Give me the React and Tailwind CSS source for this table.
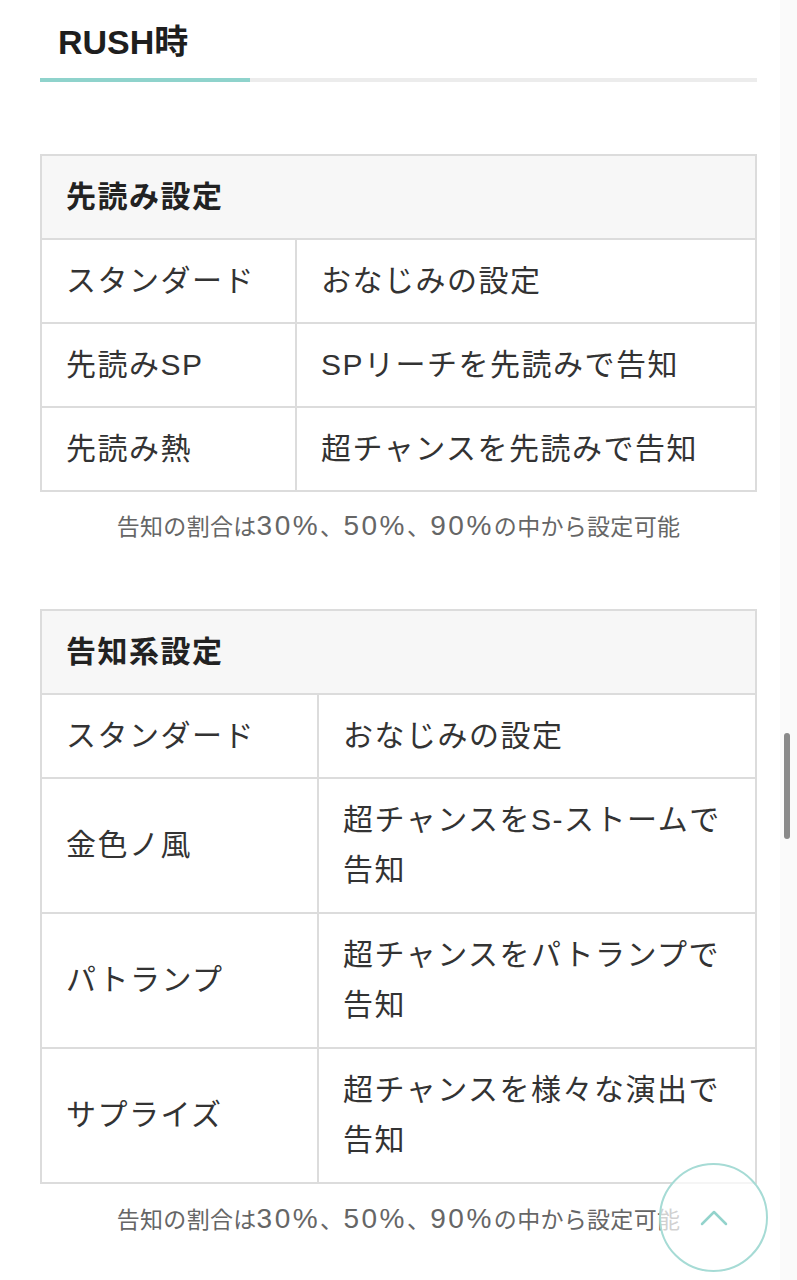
import React from 'react';

const senyomi = [
    ['スタンダード', ['おなじみの設定']],
    ['先読みSP', ['SPリーチを先読みで告知']],
    ['先読み熱', ['超チャンスを先読みで告知']],
];

const kokuchi = [
    ['スタンダード', ['おなじみの設定']],
    ['金色ノ風', ['超チャンスをS-ストームで', '告知']],
    ['パトランプ', ['超チャンスをパトランプで', '告知']],
    ['サプライズ', ['超チャンスを様々な演出で', '告知']],
];

const SettingTable = ({ title, rows, leftWidth }) => {
    return (
        <table className='w-full table-fixed border-collapse border-2 border-[#dcdcdc] text-[30px] leading-[50px] tracking-[1.5px] text-[#333]'>
            <colgroup>
                <col className={leftWidth} />
                <col />
            </colgroup>
            <thead>
                <tr>
                    <th colSpan={2} className='bg-[#f7f7f7] border-2 border-[#dcdcdc] px-[24px] py-[16px] text-left font-bold text-[#222]'>{title}</th>
                </tr>
            </thead>
            <tbody>
                {rows.map(([label, lines]) => {
                    const pad = lines.length > 1 ? 'pt-[16px] pb-[17px]' : 'py-[16px]';
                    return (
                        <tr key={label}>
                            <td className={`border-2 border-[#dcdcdc] px-[24px] ${pad} align-middle whitespace-nowrap`}>{label}</td>
                            <td className={`border-2 border-[#dcdcdc] px-[24px] ${pad} align-middle whitespace-nowrap`}>
                                {lines.map((l) => <div key={l}>{l}</div>)}
                            </td>
                        </tr>
                    );
                })}
            </tbody>
        </table>
    );
};

const Num = ({ children }) => <span className='text-[28px] tracking-[2.5px]'>{children}</span>;

const Note = ({ className }) => (
    <p className={`text-center text-[23px] leading-[34px] tracking-[0.3px] text-[#666] ${className}`}>
        告知の割合は<Num>30%</Num>、<Num>50%</Num>、<Num>90%</Num>の中から設定可能
    </p>
);

export default function App() {
    return (
        <div className='relative h-[1280px] bg-white overflow-hidden' style={{ fontFamily: '"Liberation Sans", "Noto Sans CJK JP", sans-serif' }}>
            <div className='absolute top-0 right-0 w-[17px] h-full bg-[#fafafa]'></div>
            <div className='relative px-[40px] pt-[17px]'>
                <h2 className='pl-[18px] text-[34px] leading-[50px] font-bold text-[#1e1e1e]'>RUSH時</h2>
                <div className='mt-[11px] flex h-[4px]'>
                    <div className='w-[210px] bg-[#8fd3cc]'></div>
                    <div className='flex-1 bg-[#ececec]'></div>
                </div>

                <div className='mt-[72px]'>
                    <SettingTable title='先読み設定' rows={senyomi} leftWidth='w-[255px]' />
                </div>
                <Note className='mt-[17px]' />

                <div className='mt-[65px]'>
                    <SettingTable title='告知系設定' rows={kokuchi} leftWidth='w-[277px]' />
                </div>
                <Note className='mt-[18px]' />
            </div>

            {/* page top button */}
            <button className='absolute left-[659px] top-[1163px] w-[109px] h-[109px] rounded-full border-2 border-[#a6dbd5] bg-white/70 flex items-center justify-center'>
                <svg width='28' height='17' viewBox='0 0 28 17' fill='none' stroke='#93d3cc' strokeWidth='2.5' strokeLinecap='round' strokeLinejoin='round'>
                    <path d='M2 15 L14 3 L26 15' />
                </svg>
            </button>

            {/* scroll indicator */}
            <div className='absolute left-[784px] top-[733px] w-[6px] h-[106px] rounded-full bg-[#8a8a8a]'></div>
        </div>
    );
}
